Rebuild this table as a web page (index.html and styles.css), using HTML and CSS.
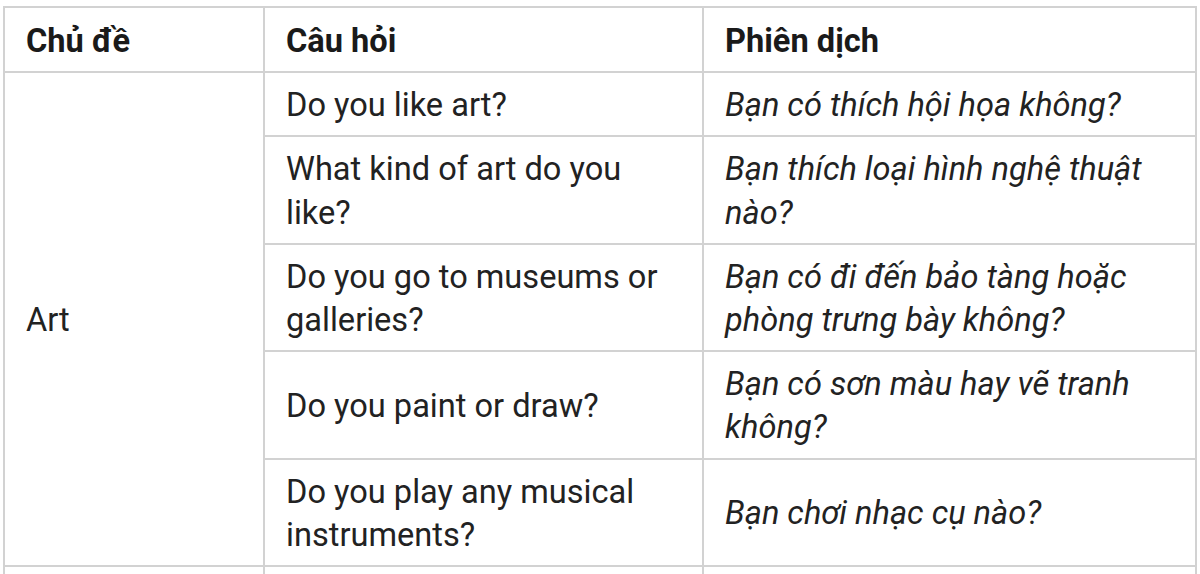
FILE: index.html
```html
<!DOCTYPE html>
<html lang="vi">
<head>
<meta charset="utf-8">
<title>Art questions</title>
<link rel="stylesheet" href="styles.css">
</head>
<body>
<table class="qa">
  <colgroup>
    <col class="c-topic">
    <col class="c-question">
    <col class="c-trans">
  </colgroup>
  <thead>
    <tr>
      <th>Chủ đề</th>
      <th>Câu hỏi</th>
      <th>Phiên dịch</th>
    </tr>
  </thead>
  <tbody>
    <tr>
      <td rowspan="5" class="topic">Art</td>
      <td>Do you like art?</td>
      <td class="tr">Bạn có thích hội họa không?</td>
    </tr>
    <tr>
      <td>What kind of art do you like?</td>
      <td class="tr">Bạn thích loại hình nghệ thuật nào?</td>
    </tr>
    <tr>
      <td>Do you go to museums or galleries?</td>
      <td class="tr">Bạn có đi đến bảo tàng hoặc phòng trưng bày không?</td>
    </tr>
    <tr>
      <td>Do you paint or draw?</td>
      <td class="tr">Bạn có sơn màu hay vẽ tranh không?</td>
    </tr>
    <tr>
      <td>Do you play any musical instruments?</td>
      <td class="tr">Bạn chơi nhạc cụ nào?</td>
    </tr>
    <tr class="next">
      <td>&nbsp;</td>
      <td>&nbsp;</td>
      <td class="tr">&nbsp;</td>
    </tr>
  </tbody>
</table>
</body>
</html>
```

FILE: styles.css
```css
html, body {
  margin: 0;
  padding: 0;
  background: #ffffff;
  height: 100%;
  overflow: hidden;
}

body {
  box-sizing: border-box;
  padding: 6px 0 0 3px;
  font-family: Roboto, "Liberation Sans", Arial, sans-serif;
  color: #222222;
}

.qa {
  border-collapse: collapse;
  table-layout: fixed;
  width: 1192px;
}

.c-topic { width: 260px; }
.c-question { width: 439px; }
.c-trans { width: 493px; }

.qa th,
.qa td {
  border: 2px solid #d2d2d2;
  padding: 11px 21px 8px;
  font-size: 32.6px;
  line-height: 43.2px;
  text-align: left;
  vertical-align: middle;
}

.qa th {
  font-weight: 700;
  color: #1a1a1a;
  padding-top: 12px;
  padding-bottom: 8px;
}

.qa td.tr {
  font-style: italic;
}

.qa tr.next td {
  height: 86px;
}
```
